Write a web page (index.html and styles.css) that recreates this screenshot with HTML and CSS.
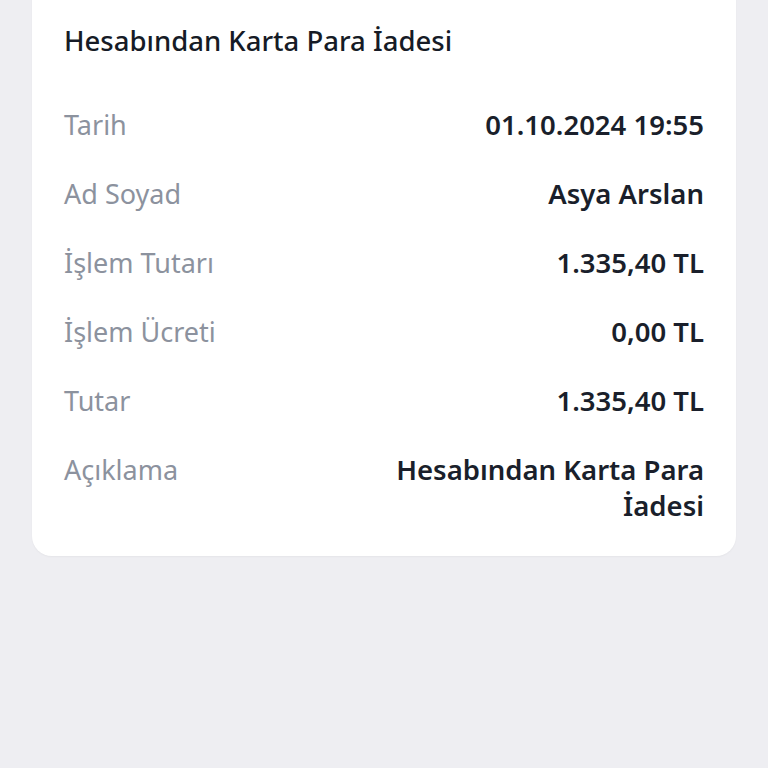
FILE: index.html
```html
<!DOCTYPE html>
<html lang="tr">
<head>
    <meta charset="UTF-8">
    <meta name="viewport" content="width=device-width, initial-scale=1.0">
    <title>İşlem Detayı</title>
    <link rel="stylesheet" href="styles.css">
</head>
<body>

<!-- İşlem detay kartı -->
<div class="receipt-card">
    <h1 class="receipt-title">Hesabından Karta Para İadesi</h1>

    <div class="detail-row">
        <span class="detail-label">Tarih</span>
        <span class="detail-value">01.10.2024 19:55</span>
    </div>
    <div class="detail-row">
        <span class="detail-label">Ad Soyad</span>
        <span class="detail-value">Asya Arslan</span>
    </div>
    <div class="detail-row">
        <span class="detail-label">İşlem Tutarı</span>
        <span class="detail-value">1.335,40 TL</span>
    </div>
    <div class="detail-row">
        <span class="detail-label">İşlem Ücreti</span>
        <span class="detail-value">0,00 TL</span>
    </div>
    <div class="detail-row">
        <span class="detail-label">Tutar</span>
        <span class="detail-value">1.335,40 TL</span>
    </div>
    <div class="detail-row">
        <span class="detail-label">Açıklama</span>
        <span class="detail-value">Hesabından Karta Para İadesi</span>
    </div>
</div>

</body>
</html>
```

FILE: styles.css
```css
* {
    margin: 0;
    padding: 0;
    box-sizing: border-box;
    font-family: 'Noto Sans', 'Liberation Sans', sans-serif;
}

body {
    background-color: #eeeef2;
    color: #1a1f2b;
    height: 100vh;
}

/* Kart */
.receipt-card {
    background: #fff;
    margin: -20px 32px 0;
    padding: 43px 32px 32px;
    border-radius: 20px;
    box-shadow: 0 1px 2px rgba(0, 0, 0, 0.04);
}

.receipt-title {
    font-size: 27.5px;
    font-weight: 500;
    line-height: 36px;
    color: #161b26;
    margin-bottom: 48px;
}

/* Satırlar */
.detail-row {
    display: flex;
    justify-content: space-between;
    align-items: flex-start;
    line-height: 36px;
    margin-bottom: 33px;
}

.detail-row:last-child {
    margin-bottom: 0;
}

.detail-label {
    font-size: 27px;
    color: #8c929e;
}

.detail-value {
    font-size: 27.5px;
    font-weight: 600;
    color: #1a1f2b;
    text-align: right;
    max-width: 320px;
}
```
